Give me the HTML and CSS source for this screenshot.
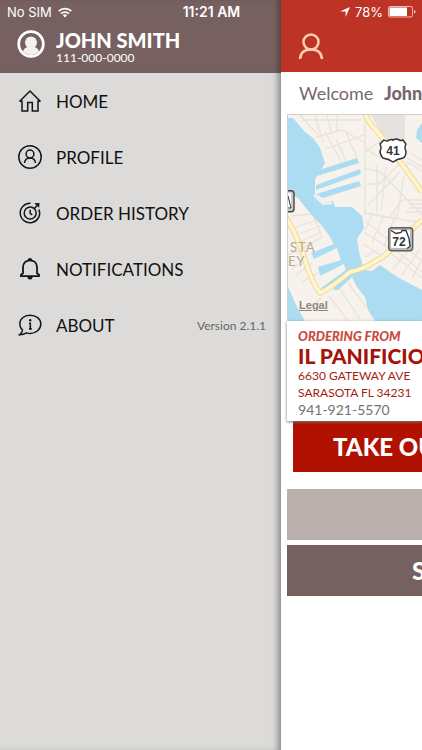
FILE: index.html
```html
<!DOCTYPE html>
<html lang="en">
<head>
<meta charset="utf-8">
<meta name="viewport" content="width=device-width, initial-scale=1">
<title>Menu</title>
<link rel="stylesheet" href="styles.css">
</head>
<body>
<div class="status">
  <div class="status-left">
    <span>No SIM</span>
    <svg width="14" height="11" viewBox="0 0 14 11" fill="none" stroke="#fff" stroke-width="1.7"><path d="M.7 4.2a9 9 0 0 1 12.6 0M3 6.7a5.8 5.8 0 0 1 8 0"/><path d="M7 10.600 4.800 8.300a3.200 3.200 0 0 1 4.400 0z" fill="#fff" stroke="none"/></svg>
  </div>
  <div class="status-time">11:21 AM</div>
  <div class="status-right">
    <svg width="10" height="10" viewBox="0 0 10 10"><path d="M10 0 5.600 10V4.600H0z" fill="#fff"/></svg>
    <span>78%</span>
    <svg width="28" height="12" viewBox="0 0 28 12"><rect x=".5" y=".5" width="24" height="10.500" rx="1.500" fill="none" stroke="#eeb9b1"/><rect x="1.500" y="1.500" width="17.500" height="8.500" fill="#fff"/><path d="M26 4q1.500 .6 1.500 1.800T26 7.600z" fill="#f6d9d5"/></svg>
  </div>
</div>
<div class="app">
  <aside class="drawer">
    <header class="user">
      <svg width="28" height="28" viewBox="0 0 28 28"><circle cx="14" cy="14" r="12.300" fill="none" stroke="#fff" stroke-width="2.800"/><circle cx="14" cy="12.500" r="6" fill="#f3f0f0"/><path d="M6 21.500c1-3 2.500-4.500 8-5 5.500.5 7 2 8 5C18 26 10 26 6 21.500z" fill="#f3f0f0"/></svg>
      <div>
        <h1 class="user-name">JOHN SMITH</h1>
        <p class="user-phone">111-000-0000</p>
      </div>
    </header>
    <nav class="menu">
      <a href="#home"><svg width="24" height="24" viewBox="0 0 24 24"><path d="M1.500 12.500 12 2l10.500 10.500M1.500 12.200H4V22h5.700v-8.500h4.600V22H20v-9.800h2.500"/></svg><span>HOME</span></a>
      <a href="#profile"><svg width="24" height="24" viewBox="0 0 24 24"><circle cx="12" cy="12" r="11.200"/><circle cx="12" cy="9" r="3.900"/><path d="M6.500 18c.3-3.200 2-5.100 5.500-5.100s5.200 1.900 5.500 5.100"/></svg><span>PROFILE</span></a>
      <a href="#orders"><svg width="24" height="24" viewBox="0 0 24 24"><path d="M12.500 2.300A9.700 9.700 0 1 0 21 8.500"/><circle cx="12.200" cy="12" r="6"/><path d="M16 8l3-3.500M12.200 8.800v3.500l2 1.500"/><path d="M16.300 2.300 21.500 2l-.4 4.700z" fill="#161616" stroke="none"/></svg><span>ORDER HISTORY</span></a>
      <a href="#notifications"><svg width="24" height="24" viewBox="0 0 24 24"><path d="M3 19.200v-1.400l2-1.600V10.500C5 6 8 3.300 12 3.300S19 6 19 10.500v5.700l2 1.600v1.400z" stroke-width="1.800"/><path d="M9.800 3.200a2.200 2.200 0 0 1 4.400 0zM9.500 20h5a2.500 2.500 0 0 1-5 0z" fill="#161616" stroke="none"/></svg><span>NOTIFICATIONS</span></a>
      <a href="#about"><svg width="24" height="24" viewBox="0 0 24 24"><path d="M4.500 17C2.600 15.300 1.800 13.300 1.800 11 1.800 5.800 6 2.300 12 2.300S22.800 5.800 22.800 11 18 20.500 12 20.500q-2 0-3.500-.6-3 2-7 1.900 2.800-1.800 3-4.800z"/><path d="M11 10.300h1.300v5.200M11 15.900h2.800" stroke-width="1.600"/><circle cx="12.200" cy="7.300" r="1.200" fill="#161616" stroke="none"/></svg><span>ABOUT</span><small>Version 2.1.1</small></a>
    </nav>
  </aside>
  <main class="page">
    <header class="bar">
      <button class="account" aria-label="Account"><svg width="26" height="27" viewBox="0 0 26 27" fill="none" stroke="#ffcdb4" stroke-width="2.500"><circle cx="13" cy="9" r="7.500"/><path d="M2 26C2.500 19.500 6.500 16.500 13 16.500S23.500 19.500 24 26"/></svg></button>
    </header>
    <p class="welcome">Welcome <strong>John</strong></p>
    <div class="map">
      <svg width="134" height="206" viewBox="0 0 134 206">
        <rect width="134" height="206" fill="#f7f2eb"/>
        <path d="M83 0h34v24L97 25z" fill="#e6e2df"/>
        <g fill="none" stroke="#e7e3dc" stroke-width="1.300">
          <path d="M14 5h60M12 0l18 20M27 0q4 16 9 28M39 0l4 16M49 0v17M28 22 54 15 78 28M37 34 76 20M37 17 55 50M48 24l11 24M58 17l11 26M77 0v100M77 37 94 25M77 54q16 0 24 12l33 34M78 33q11 11 32 14M79 69h12l19-19 10 1M89 50v52M98 52l-5 44M80 90l32-33M102 102l12-17h20M116 60l-7 44M122 38l12 7M119 43l15 9M119 47l15 9M121 85h13M121 89h13M121 93h13M118 97h16"/>
          <path d="M3 101 25 99 34 122 15 133M8 112l22-7M11 119l21-8M14 126l17-8M0 139l12-3M4 154l15-11M8 160l16-12M14 167l16-9M41 181l19 25M52 174l20 30M60 168l19 25M33 183l-14 13M77 106l31 25M76 117l28 18M75 129l17 11M85 98l-8 17M96 100l-12 28M108 98l-12 34M77 142l12-7M103 138l31 25M109 136l25 21M117 132l17 14M105 154l20-25M114 160l18-26M124 163l10-18M76 98l58 10"/>
        </g>
        <g fill="#acdcf2">
          <path d="M0 3H5L17 17 25 23 32 33 37 48 33 55 27 64V79L35 88 45 86 47 92H64L74 101 76 113 69 124 71 137 76 155 84 156 92 150 109 162 134 175V206H87L80 195 77 182 69 172 64 162 50 175 45 175 58 156 56 149 38 158 32 161 30 152 53 145 49 133 26 144 23 138 46 129 42 122 35 112 22 98 10 83 0 77z"/>
          <path d="M31 55 69 43 71 48 29 61zM28 70 72 54 73 59 28 75zM28 79 71 66 73 71 35 83zM33 173 58 155 60 158 33 177zM82 160 92 154 88 165zM0 172 9 192 17 206H0zM134 8 129 15 128 23 134 28z"/>
        </g>
        <path d="M26 80 35 89 44 88" fill="none" stroke="#f7f2eb" stroke-width="2"/>
        <path d="M77-2q3 10 12 18l18 23 27 38M-2 102q12 20 19 43t15 33q12-6 30-21 15-3 27-12 8-3 16-13l29-27" fill="none" stroke="#e9d69b" stroke-width="5.500" stroke-linejoin="round"/>
        <path d="M77-2q3 10 12 18l18 23 27 38M-2 102q12 20 19 43t15 33q12-6 30-21 15-3 27-12 8-3 16-13l29-27" fill="none" stroke="#fff5c9" stroke-width="3.800" stroke-linejoin="round"/>
        <g class="area"><text x="2" y="137">STA</text><text x="0" y="151">EY</text></g>
        <path d="M96 25q3 2 5 0 4-1 4 0 4-2 6 0 2 1 4 0l3 4q-2 4 0 7 0 6-3 7-6 1-10 4-4-3-10-4-3-3-3-7 2-3 0-7z" fill="#fff" stroke="#303030" stroke-width="1.400"/>
        <text class="route" x="105" y="40">41</text>
        <rect x="100.700" y="112.700" width="24" height="23" rx="3" fill="#b9b9bb" stroke="#606063" stroke-width="1.400"/>
        <rect x="103" y="115" width="19" height="18" rx="1" fill="#fff"/>
        <path d="M103 115.500l5 3 5-1 1-2h4l3 8 1 8-3 2" fill="none" stroke="#333" stroke-width="1.300"/>
        <text class="route" x="111" y="131">72</text>
        <path d="M-3 75.700h6q3 0 3 3v15q0 3-3 3h-6z" fill="#ccc" stroke="#444" stroke-width="1.400"/><path d="M0 78h3v16H0z" fill="#fff"/><path d="M0 81l3 12H0" fill="none" stroke="#333"/>
      </svg>
      <a class="legal" href="#legal">Legal</a>
    </div>
    <section class="store">
      <p class="store-label">ORDERING FROM</p>
      <h2>IL PANIFICIO</h2>
      <p class="address">6630 GATEWAY AVE<br>SARASOTA FL 34231</p>
      <p class="tel">941-921-5570</p>
    </section>
    <button class="btn takeout">TAKE OUT</button>
    <div class="btn blank"></div>
    <button class="btn second">S</button>
  </main>
</div>
</body>
</html>
```
FILE: styles.css
```css
* { box-sizing: border-box; }
body {
  margin: 0;
  font-family: Lato, "Liberation Sans", sans-serif;
  overflow: hidden;
  background: #fff;
}
h1, h2, p { margin: 0; }
a { color: inherit; text-decoration: none; }
button { border: 0; padding: 0; font: inherit; text-align: left; }
svg { display: block; flex: none; }

.status {
  position: absolute;
  inset: 0 0 auto;
  z-index: 3;
  display: grid;
  grid-template-columns: 1fr auto 1fr;
  align-items: center;
  height: 24px;
  padding: 0 6px 0 7px;
  color: #fff;
  font: 13px/24px Inter, "Liberation Sans", sans-serif;
}
.status-left, .status-right { display: flex; align-items: center; gap: 6px; }
.status-right { justify-content: flex-end; gap: 5px; }
.status-time { font-size: 14px; font-weight: 600; }

.app { display: flex; min-height: 100vh; }
.drawer {
  flex: 0 0 auto;
  width: 66.6%;
  background: #dcdbd9;
  box-shadow: inset -6px 0 6px -3px #8a8888;
}
.user {
  display: flex;
  gap: 11px;
  height: 73px;
  padding: 30px 0 0 17px;
  background: #766160;
  color: #fff;
  box-shadow: inset -6px 0 6px -4px #483c3b;
}
.user-name { font-size: 20px; line-height: 20px; font-weight: 900; }
.user-phone { font-size: 12px; line-height: 16px; }

.menu a {
  display: flex;
  align-items: center;
  gap: 14px;
  height: 56px;
  padding: 0 15px 0 18px;
  color: #111;
  font-size: 17px;
}
.menu svg { fill: none; stroke: #161616; stroke-width: 1.5; }
.menu small { margin-left: auto; font-size: 12px; color: #666; }

.page {
  position: relative;
  z-index: 1;
  flex: 1;
  min-width: 0;
  overflow: hidden;
  white-space: nowrap;
  background: #fff;
}
.bar { height: 72px; padding: 33px 0 0 17px; background: #bd3325; }
.account { display: block; background: none; }
.welcome {
  height: 42px;
  padding-left: 18px;
  font-size: 18px;
  line-height: 42px;
  color: #76686a;
}
.welcome strong { margin-left: 6px; font-weight: 900; }

.map {
  position: relative;
  height: 207px;
  margin-left: 6px;
  border: solid #d2d0cf;
  border-width: 1px 0 0 1px;
  overflow: hidden;
}
.area { font: 13px Lato, sans-serif; letter-spacing: 1px; fill: #b4a995; }
.route { font: bold 12px "Liberation Sans", sans-serif; text-anchor: middle; fill: #333; }
.legal {
  position: absolute;
  left: 11px;
  bottom: 9px;
  font: bold 11px/14px "Liberation Sans", sans-serif;
  color: #8a8782;
  text-decoration: underline;
}

.store {
  position: relative;
  height: 100px;
  margin-left: 6px;
  padding: 7px 0 0 11px;
  background: #fff;
  box-shadow: 0 1px 3px #777;
  color: #a51d12;
}
.store-label { font-size: 13px; line-height: 17px; font-weight: 900; font-style: italic; color: #c94a40; }
.store h2 { font-size: 21px; line-height: 22px; font-weight: 900; color: #a51309; }
.address { font-size: 12px; line-height: 17px; }
.tel { font-size: 14px; line-height: 17px; color: #777173; }

.btn {
  display: block;
  width: 100%;
  height: 51px;
  margin: 0 0 5px 6px;
  color: #fff;
  font-size: 24px;
  font-weight: 900;
}
.takeout { margin: 0 0 17px 12px; padding-left: 40px; background: #b01100; }
.blank { background: #b9afad; }
.second { padding-left: 125px; background: #756160; }
```
